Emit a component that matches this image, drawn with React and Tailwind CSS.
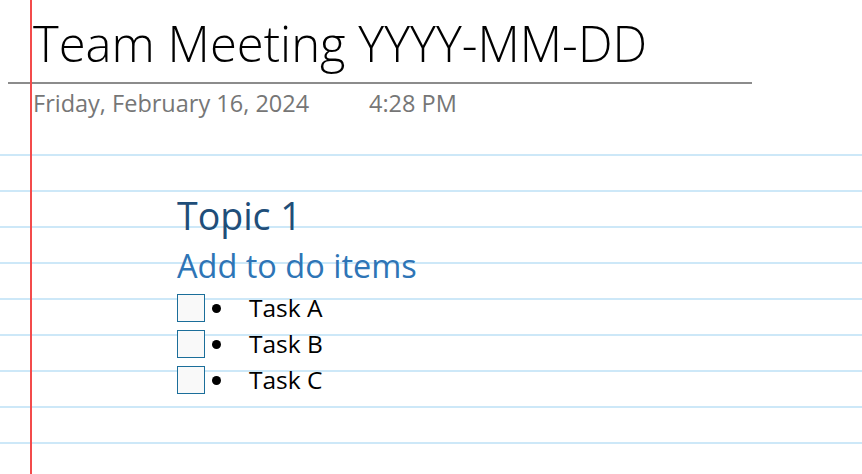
import React from "react";

const tasks = ["Task A", "Task B", "Task C"];

const font = "font-['Open_Sans','Noto_Sans',sans-serif]";

export default function App() {
  return (
    <div className={`relative h-[474px] w-full overflow-hidden bg-white flex flex-col ${font}`}>
      {/* red margin line */}
      <div className="absolute left-[30px] top-0 bottom-0 w-[2px] bg-[#f34b4b] z-10" />

      {/* page header */}
      <div className="h-[120px] shrink-0">
        <h1 className="pl-[33px] pt-[19px] text-[49px] leading-[49px] font-light text-black whitespace-nowrap">
          Team Meeting YYYY-MM-DD
        </h1>
        <div className="ml-[8px] mt-[14px] h-[2px] w-[744px] bg-[#8c8c8c]" />
        <div className="mt-[7px] flex pl-[33px] text-[23.5px] leading-[24px] text-[#767676] whitespace-nowrap">
          <span className="w-[336px]">Friday, February 16, 2024</span>
          <span>4:28 PM</span>
        </div>
      </div>

      {/* ruled body */}
      <div className="flex-1 bg-[repeating-linear-gradient(to_bottom,transparent_0px,transparent_34px,#cde8f8_34px,#cde8f8_36px)]">
        <div className="pl-[177px] pt-[77px]">
          <h2 className="text-[37.5px] leading-[37px] text-[#1f4e79] whitespace-nowrap">Topic 1</h2>
          <h3 className="mt-[16px] text-[32.5px] leading-[32px] text-[#2e75b6] whitespace-nowrap">
            Add to do items
          </h3>
          <ul className="mt-[8px]">
            {tasks.map((t) => (
              <li key={t} className="flex h-[36px] items-center">
                <span className="h-[28px] w-[28px] border border-[#1b6e9a] bg-[#f9f9f9]" />
                <span className="ml-[7px] h-[9px] w-[9px] rounded-full bg-black" />
                <span className="ml-[28px] text-[24.5px] leading-[36px] text-black">{t}</span>
              </li>
            ))}
          </ul>
        </div>
      </div>
    </div>
  );
}
